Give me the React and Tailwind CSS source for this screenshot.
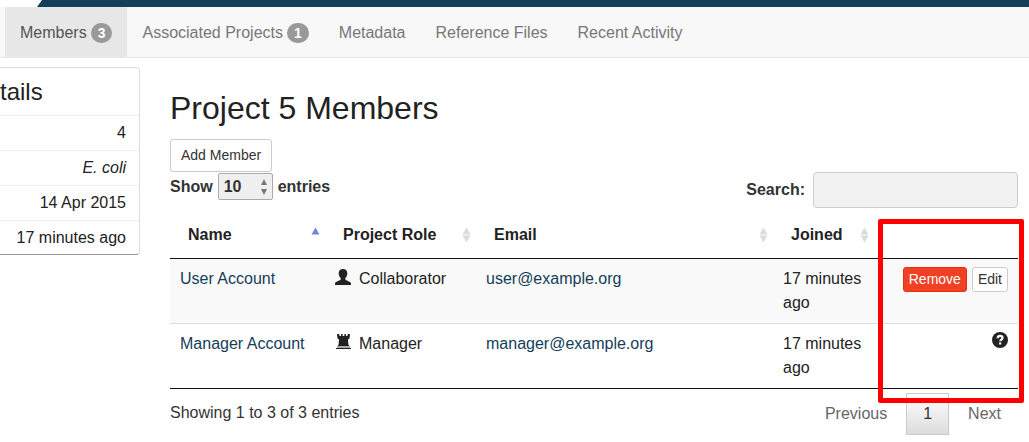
const tabs = [
  { label: 'Members', count: 3, active: true },
  { label: 'Associated Projects', count: 1 },
  { label: 'Metadata' },
  { label: 'Reference Files' },
  { label: 'Recent Activity' },
];

const columns = [
  { label: 'Name', sort: 'asc', width: 'w-[155px]' },
  { label: 'Project Role', sort: 'both', width: 'w-[151px]' },
  { label: 'Email', sort: 'both', width: '' },
  { label: 'Joined', sort: 'both', width: 'w-[101px]' },
];

const members = [
  { name: 'User Account', role: 'Collaborator', email: 'user@example.org', joined: '17 minutes ago' },
  { name: 'Manager Account', role: 'Manager', email: 'manager@example.org', joined: '17 minutes ago' },
];

function SortIcon({ sort }) {
  return (
    <svg width="9" height="16" viewBox="0 0 9 16" aria-hidden="true">
      <path d="M4.5 0.5 8.5 7.5H0.5Z" fill={sort === 'asc' ? '#7b83d8' : '#dcdcdc'} />
      {sort === 'both' && <path d="M0.5 8.5H8.5L4.5 15.5Z" fill="#dcdcdc" />}
    </svg>
  );
}

function PersonIcon() {
  return (
    <svg width="16" height="16" viewBox="0 0 16 16" fill="#222" aria-hidden="true">
      <path d="M8 0C10.800 0 12.300 1.700 12.300 4.200C12.300 6.200 11.500 8 10.300 9V10.400C10.700 11.400 15 12.300 15.700 13.600C16 14.300 16 15 16 16H0C0 15 0 14.300 .3 13.600C1 12.300 5.300 11.400 5.700 10.400V9C4.500 8 3.700 6.200 3.700 4.200C3.700 1.700 5.200 0 8 0Z" />
    </svg>
  );
}

function RookIcon() {
  return (
    <svg width="16" height="16" viewBox="0 0 16 16" fill="#222" aria-hidden="true">
      <path d="M2 0H4.200L4.600 2H6L6.200 0H7.500L7.700 2H9.300L9.500 0H10.800L11 2H12.400L12.800 0H15L14.500 4.500L13 5.500L13.400 10.500L14.400 12H2.600L3.600 10.500L4 5.500L2.500 4.500Z" />
      <path d="M2 12H15V14H2Z" fill="#aaa" />
      <path d="M1 14H16V15H1Z" />
    </svg>
  );
}

function HelpIcon() {
  return (
    <svg width="16" height="16" viewBox="0 0 16 16" aria-hidden="true">
      <circle cx="8" cy="8" r="8" fill="#222" />
      <path d="M5.600 6.300C5.600 4.500 6.600 3.900 8.100 3.900C9.600 3.900 10.500 4.700 10.500 5.900C10.500 7.500 8.300 7.600 8.200 9.300" fill="none" stroke="#fff" strokeWidth="2.2" />
      <path d="M7.100 10.400H9.300V12.500H7.100Z" fill="#fff" />
    </svg>
  );
}

function Tabs() {
  return (
    <nav className="flex border-b border-[#e7e7e7] bg-[#f8f8f8] pl-[5px]">
      {tabs.map((tab) => (
        <a
          key={tab.label}
          href="#"
          className={`flex h-[50px] items-center gap-1 px-[15px] pt-0.5 ${tab.active ? 'bg-[#e7e7e7] text-[#555]' : 'text-[#777]'}`}
        >
          {tab.label}
          {tab.count && (
            <span className="rounded-[10px] bg-[#999] px-[7px] text-sm leading-5 font-bold text-white">{tab.count}</span>
          )}
        </a>
      ))}
    </nav>
  );
}

function Details() {
  return (
    <aside className="mt-[9px] w-[140px] shrink-0 rounded-r border-y border-r border-[#ddd] border-b-[#999]">
      <h3 className="h-[47px] pt-2 text-2xl leading-8">tails</h3>
      <ul className="text-right">
        <li className="border-t border-[#eee] pr-[13px] leading-[34px]">4</li>
        <li className="border-t border-[#eee] pr-[13px] leading-[34px] italic">E. coli</li>
        <li className="border-t border-[#eee] pr-[13px] leading-[34px]">14 Apr 2015</li>
        <li className="border-t border-[#eee] pr-[13px] leading-[33px]">17 minutes ago</li>
      </ul>
    </aside>
  );
}

function MembersTable() {
  return (
    <table className="w-full table-fixed border-collapse">
      <thead>
        <tr className="border-b border-[#111]">
          {columns.map((column) => (
            <th key={column.label} className={`h-[46px] p-0 pr-[5px] pl-[18px] ${column.width}`}>
              <button type="button" className="flex w-full items-center justify-between font-bold">
                {column.label}
                <SortIcon sort={column.sort} />
              </button>
            </th>
          ))}
          <th className="w-36" aria-label="Actions" />
        </tr>
      </thead>
      <tbody className="border-b border-[#111]">
        {members.map((member, index) => (
          <tr key={member.name} className={`align-top ${index === 0 ? 'bg-[#f9f9f9]' : 'border-t border-[#ddd]'}`}>
            <td className="px-2.5 py-2"><a href="#" className="text-[#153e59]">{member.name}</a></td>
            <td className="px-2.5 py-2">
              <span className="flex items-start gap-2">
                <span className="pt-0.5">{member.role === 'Manager' ? <RookIcon /> : <PersonIcon />}</span>
                {member.role}
              </span>
            </td>
            <td className="px-2.5 py-2"><a href={`mailto:${member.email}`} className="text-[#153e59]">{member.email}</a></td>
            <td className="px-2.5 py-2">{member.joined}</td>
            <td className="px-2.5 py-2">
              {index === 0 ? (
                <div className="flex justify-end gap-[5px] text-sm leading-[23px]">
                  <button type="button" className="rounded-[3px] border border-[#ea2f10] bg-[#f04124] px-[5px] text-white">Remove</button>
                  <button type="button" className="rounded-[3px] border border-[#ccc] bg-white px-[5px] text-[#333]">Edit</button>
                </div>
              ) : (
                <button type="button" aria-label="Help" className="ml-auto block"><HelpIcon /></button>
              )}
            </td>
          </tr>
        ))}
      </tbody>
    </table>
  );
}

export default function App() {
  return (
    <div className="relative overflow-hidden bg-white font-['Liberation_Sans',Arial,sans-serif] text-base leading-6 text-[#222]">
      <header className="h-[7px] bg-[#153e59]">
        <svg width="42" height="7" viewBox="0 0 42 7" className="block" aria-hidden="true">
          <path d="M0 0H42L37 7H0Z" fill="#fff" />
        </svg>
      </header>
      <Tabs />
      <div className="flex items-start gap-[30px] pr-[11px]">
        <Details />
        <main className="min-w-0 flex-1 pt-[30px]">
          <h1 className="text-[32px] leading-10">Project 5 Members</h1>
          <button type="button" className="mt-[11px] block h-[33px] rounded-[3px] border border-[#ccc] px-2.5 pb-0.5 text-sm text-[#333]">
            Add Member
          </button>
          <div className="flex items-start justify-between text-[#333]">
            <label className="flex items-center gap-[5px] pt-px font-bold">
              Show
              <span className="relative">
                <select defaultValue="10" className="block h-[27px] w-[55px] appearance-none rounded-xs border border-[#aaa] bg-[#efefef] px-[5px] font-bold">
                  <option>10</option>
                  <option>25</option>
                  <option>50</option>
                </select>
                <svg width="6" height="16" viewBox="0 0 6 16" className="pointer-events-none absolute top-1.5 right-1.5" aria-hidden="true">
                  <path d="M3 0 6 6H0ZM0 10H6L3 16Z" fill="#777" />
                </svg>
              </span>
              entries
            </label>
            <label className="flex items-center gap-2 font-bold">
              Search:
              <input type="search" className="h-9 w-[205px] rounded border border-[#ccc] bg-[#f2f2f2] px-2 font-normal" />
            </label>
          </div>
          <div className="mt-1">
            <MembersTable />
          </div>
          <div className="flex items-start justify-between pt-1 pb-2 text-[#333]">
            <p className="pt-2">Showing 1 to 3 of 3 entries</p>
            <div className="flex gap-0.5 text-[#666]">
              <button type="button" className="border border-transparent px-4 py-2">Previous</button>
              <button type="button" className="border border-[#cacaca] bg-linear-to-b from-white to-[#dcdcdc] px-4 py-2 text-[#333]">1</button>
              <button type="button" className="border border-transparent px-4 py-2">Next</button>
            </div>
          </div>
        </main>
      </div>
      <div className="pointer-events-none absolute top-[219px] right-[5px] h-[184px] w-[146px] rounded-xs border-[5px] border-[#f00]" />
    </div>
  );
}
